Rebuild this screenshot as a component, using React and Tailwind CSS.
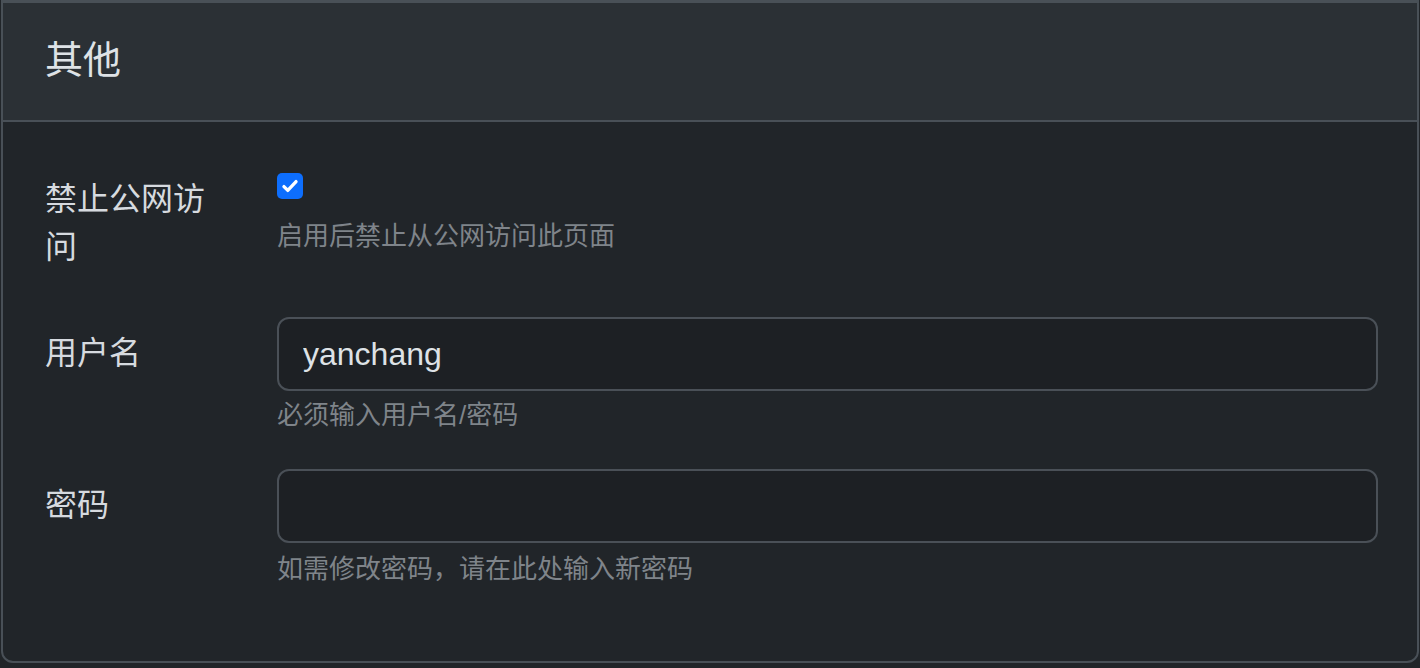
export default function App() {
  return (
    <div
      className="w-[1420px] h-[668px] bg-[#212529] overflow-hidden pl-[1px]"
      style={{ fontFamily: '"Liberation Sans", "Noto Sans CJK SC", sans-serif' }}
    >
      <div className="w-[1418px] h-[663px] border-2 border-t-[3px] border-[#495057] rounded-b-[12px] bg-[#212529] flex flex-col">
        <div className="h-[119px] shrink-0 bg-[#2b3035] border-b-2 border-[#495057] flex items-center pl-[42px] pb-[4px]">
          <h5 className="text-[38px] leading-[48px] text-[#dee2e6]">其他</h5>
        </div>

        <div className="pt-[39px] pl-[42px] pr-[39px] flex flex-col">
          <div className="flex mb-[32px]">
            <label className="w-[232px] shrink-0 pt-[14px] pb-[14px] pr-[48px] text-[32px] leading-[48px] text-[#d6dadf]">
              禁止公网访问
            </label>
            <div className="flex-1">
              <div className="h-[48px] pt-[12px]">
                <div className="w-[26px] h-[26px] rounded-[5px] bg-[#0d6efd] flex items-center justify-center">
                  <svg width="22" height="22" viewBox="0 0 20 20" fill="none">
                    <path d="M4.5 10.5l3.5 3.5L15.5 6" stroke="#fff" strokeWidth="3" strokeLinecap="round" strokeLinejoin="round" />
                  </svg>
                </div>
              </div>
              <div className="mt-[8px] text-[26px] leading-[39px] text-[#7f848a]">启用后禁止从公网访问此页面</div>
            </div>
          </div>

          <div className="flex mb-[34px]">
            <label className="w-[232px] shrink-0 pt-[12px] text-[32px] leading-[48px] text-[#d6dadf]">用户名</label>
            <div className="flex-1">
              <input
                type="text"
                defaultValue="yanchang"
                className="w-full h-[74px] px-[24px] bg-[#1d2024] border-2 border-[#4a5057] rounded-[12px] text-[32px] text-[#dee2e6] outline-none"
              />
              <div className="mt-[5px] text-[26px] leading-[39px] text-[#7f848a]">必须输入用户名/密码</div>
            </div>
          </div>

          <div className="flex">
            <label className="w-[232px] shrink-0 pt-[12px] text-[32px] leading-[48px] text-[#d6dadf]">密码</label>
            <div className="flex-1">
              <input
                type="password"
                className="w-full h-[74px] px-[24px] bg-[#1d2024] border-2 border-[#4a5057] rounded-[12px] text-[32px] text-[#dee2e6] outline-none"
              />
              <div className="mt-[7px] text-[26px] leading-[39px] text-[#7f848a]">如需修改密码，请在此处输入新密码</div>
            </div>
          </div>
        </div>
      </div>
    </div>
  );
}
